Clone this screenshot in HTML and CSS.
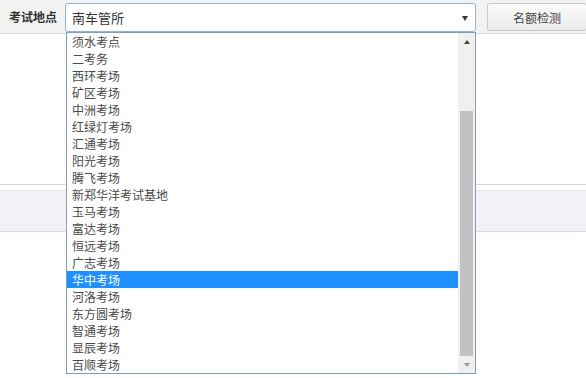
FILE: index.html
```html
<!DOCTYPE html>
<html lang="zh-CN">
<head>
<meta charset="utf-8">
<title>考试地点</title>
<link rel="stylesheet" href="styles.css">
</head>
<body>
<div class="topbar">
  <span class="label">考试地点</span>
  <div class="select">
    <span class="select-text">南车管所</span>
    <span class="arrow-down"></span>
  </div>
  <button class="btn">名额检测</button>
</div>
<div class="content">
  <div class="divider"></div>
  <div class="band"></div>
</div>
<div class="dropdown">
  <ul class="options">
    <li>须水考点</li>
    <li>二考务</li>
    <li>西环考场</li>
    <li>矿区考场</li>
    <li>中洲考场</li>
    <li>红绿灯考场</li>
    <li>汇通考场</li>
    <li>阳光考场</li>
    <li>腾飞考场</li>
    <li>新郑华洋考试基地</li>
    <li>玉马考场</li>
    <li>富达考场</li>
    <li>恒远考场</li>
    <li>广志考场</li>
    <li class="selected">华中考场</li>
    <li>河洛考场</li>
    <li>东方圆考场</li>
    <li>智通考场</li>
    <li>显辰考场</li>
    <li>百顺考场</li>
  </ul>
  <div class="scrollbar">
    <div class="sb-btn"><span class="tri-up"></span></div>
    <div class="sb-track"><div class="sb-thumb"></div></div>
    <div class="sb-btn"><span class="tri-down"></span></div>
  </div>
</div>
</body>
</html>
```
FILE: styles.css
```css
html, body {
  margin: 0;
  padding: 0;
  background: #ffffff;
  font-family: "Noto Sans CJK SC", "Noto Sans", sans-serif;
  font-size: 12px;
  color: #444;
  overflow: hidden;
}

.topbar {
  display: flex;
  align-items: flex-start;
  height: 33px;
  padding-left: 9px;
  background: #f2f2f2;
  border-bottom: 1px solid #d8d8d8;
  overflow: hidden;
}

.label {
  flex-shrink: 0;
  width: 50px;
  margin-right: 6px;
  margin-top: 8px;
  font-weight: bold;
  color: #333;
  font-size: 12px;
  line-height: 17px;
  white-space: nowrap;
}

.select {
  flex-shrink: 0;
  position: relative;
  box-sizing: border-box;
  width: 411px;
  height: 29px;
  margin-top: 3px;
  border: 1px solid #92b3d4;
  border-radius: 3px;
  background: #fff;
  display: flex;
  align-items: center;
  padding-left: 6px;
}

.select-text {
  font-size: 13px;
  color: #333;
  line-height: 17px;
}

.arrow-down {
  position: absolute;
  right: 7px;
  top: 12px;
  width: 0;
  height: 0;
  border-left: 3px solid transparent;
  border-right: 3px solid transparent;
  border-top: 5px solid #333;
}

.btn {
  flex-shrink: 0;
  box-sizing: border-box;
  width: 100px;
  height: 28px;
  margin-top: 3px;
  margin-left: 11px;
  border: 1px solid #c9c9c9;
  border-radius: 3px;
  background: linear-gradient(#fbfbfb, #ebebeb);
  font-family: "Noto Sans CJK SC", sans-serif;
  font-size: 12px;
  color: #444;
  padding: 0;
}

.content {
  padding-top: 150px;
}

.divider {
  border-top: 1px solid #d6d6d6;
}

.band {
  margin-top: 5px;
  height: 40px;
  background: #f3f1f5;
  border-top: 1px solid #ebe9ee;
  border-bottom: 1px solid #dcdcdc;
}

.dropdown {
  position: absolute;
  left: 66px;
  top: 32px;
  box-sizing: border-box;
  width: 410px;
  height: 342px;
  border: 1px solid #7f9db9;
  background: #fff;
  display: flex;
}

.options {
  list-style: none;
  margin: 0;
  padding: 0;
  flex: 1;
}

.options li {
  height: 17px;
  line-height: 17px;
  padding-left: 5px;
  font-size: 12px;
  color: #4a4a4a;
  white-space: nowrap;
}

.options li.selected {
  background: #1e90ff;
  color: #fff;
}

.scrollbar {
  width: 17px;
  display: flex;
  flex-direction: column;
  background: #f1efef;
}

.sb-btn {
  height: 17px;
  display: flex;
  align-items: center;
  justify-content: center;
}

.tri-up {
  width: 0;
  height: 0;
  border-left: 3.5px solid transparent;
  border-right: 3.5px solid transparent;
  border-bottom: 4px solid #444;
}

.tri-down {
  width: 0;
  height: 0;
  border-left: 3.5px solid transparent;
  border-right: 3.5px solid transparent;
  border-top: 4px solid #9a9a9a;
}

.sb-track {
  flex: 1;
  display: flex;
  flex-direction: column;
  padding: 0 2px 0 2px;
}

.sb-thumb {
  margin-top: 61px;
  flex: 1;
  background: #c2c2c2;
}
```
